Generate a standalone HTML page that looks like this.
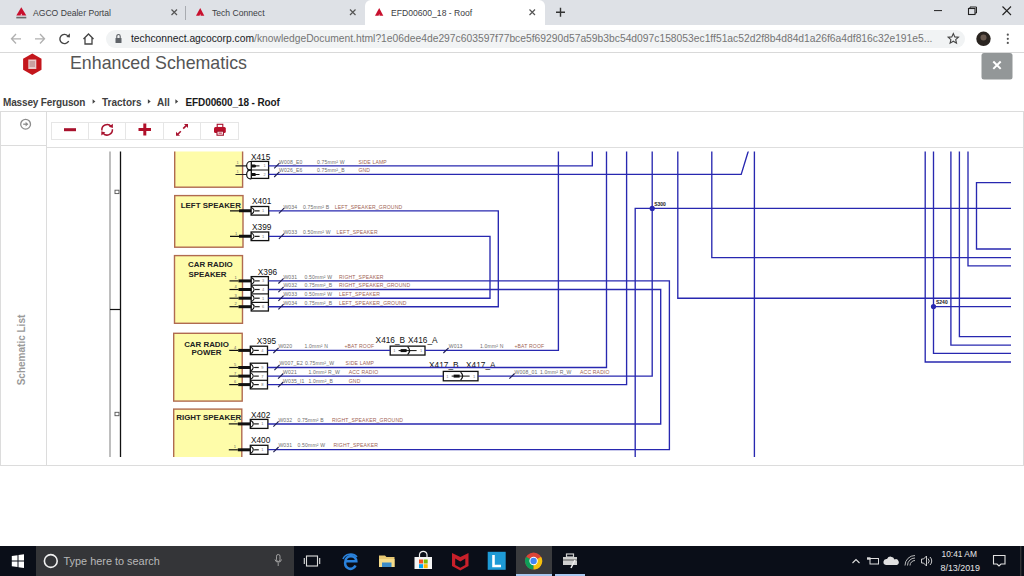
<!DOCTYPE html>
<html><head><meta charset="utf-8">
<style>
html,body{margin:0;padding:0;width:1024px;height:576px;overflow:hidden;background:#fff;font-family:"Liberation Sans",sans-serif;}
.abs{position:absolute;}
#tabbar{left:0;top:0;width:1024px;height:25px;background:#dee1e6;}
#activetab{left:365px;top:0;width:180px;height:25px;background:#fff;border-radius:6px 6px 0 0;}
#addr{left:0;top:25px;width:1024px;height:27px;background:#fff;border-bottom:1px solid #d9d9d9;}
.tabtxt{font-size:8.6px;color:#3c4043;white-space:nowrap;top:7.8px;}
#omni{left:106px;top:29.5px;width:859px;height:18.5px;background:#f1f3f4;border-radius:9.5px;}
#url{left:131px;top:33px;font-size:10.3px;color:#757575;white-space:nowrap;letter-spacing:0px;}
#url b{font-weight:normal;color:#202124;}
#title{left:70px;top:52.5px;font-size:17.8px;color:#555;white-space:nowrap;}
#bc{left:3px;top:97px;font-size:10px;font-weight:bold;color:#404040;white-space:nowrap;}
#panel{left:0;top:111px;width:1022px;height:353px;border:1px solid #dcdcdc;}
#side{left:46px;top:111px;width:1px;height:354px;background:#dcdcdc;}
#sidediv{left:0;top:145px;width:46px;height:1px;background:#dcdcdc;}
#tbdiv{left:47px;top:146.5px;width:976px;height:1.5px;background:#dedede;}
#schem{left:47px;top:148px;width:976px;height:316px;overflow:hidden;}
#taskbar{left:0;top:546px;width:1024px;height:30px;background:#0a0e18;}
#search{left:36px;top:546px;width:258px;height:30px;background:#343538;}
.btn{top:121.8px;height:16px;width:36.5px;border:1px solid #e6e6e6;background:#fff;}
#sl{left:20.5px;top:350px;font-size:10px;font-weight:bold;color:#9a9a9a;white-space:nowrap;transform:translate(-50%,-50%) rotate(-90deg);}
.ttxt{color:#e6e6e6;font-size:8.4px;white-space:nowrap;}
</style></head><body>
<div id="tabbar" class="abs"></div>
<div id="activetab" class="abs"></div>
<!-- tab separators -->
<div class="abs" style="left:185px;top:6px;width:1px;height:14px;background:#a8abb0"></div>
<div id="addr" class="abs"></div>
<div id="omni" class="abs"></div>
<div class="abs tabtxt" style="left:33px">AGCO Dealer Portal</div>
<div class="abs tabtxt" style="left:212px">Tech Connect</div>
<div class="abs tabtxt" style="left:391px">EFD00600_18 - Roof</div>
<div id="url" class="abs"><b>techconnect.agcocorp.com</b>/knowledgeDocument.html?1e06dee4de297c603597f77bce5f69290d57a59b3bc54d097c158053ec1ff51ac52d2f8b4d84d1a26f6a4df816c32e191e5...</div>
<svg class="abs" style="left:0;top:0" width="1024" height="111" viewBox="0 0 1024 111">
 <!-- tab icons -->
 <g fill="#c8102e">
  <path d="M16.3 15.6 L21.3 7.3 L26.3 15.6 Z"/>
  <path d="M196 15.7 L200.2 8.1 L204.3 15.7 Z"/>
  <path d="M375 15.7 L379.2 8.1 L383.3 15.7 Z"/>
 </g>
 <g fill="#f0d8dc">
  <path d="M20.3 15.6 L21.3 13.4 L22.3 15.6 Z"/>
  <path d="M199.4 15.7 L200.2 14 L201 15.7 Z"/>
  <path d="M378.4 15.7 L379.2 14 L380 15.7 Z"/>
 </g>
 <rect x="16.3" y="16.8" width="10" height="1.6" fill="#6a6a6a"/>
 <!-- tab close x -->
 <g stroke="#555" stroke-width="1.2">
  <path d="M171.5 9.5 L177 15 M177 9.5 L171.5 15"/>
  <path d="M350 9.5 L355.5 15 M355.5 9.5 L350 15"/>
  <path d="M529.5 9.5 L535 15 M535 9.5 L529.5 15"/>
 </g>
 <path d="M556 12.2 H565 M560.5 7.7 V16.7" stroke="#333" stroke-width="1.4"/>
 <!-- window controls -->
 <path d="M934 10.6 H942" stroke="#222" stroke-width="1"/>
 <rect x="968.5" y="8.5" width="6.5" height="6" fill="none" stroke="#222" stroke-width="1.1"/>
 <path d="M970 8.5 V7 H976.5 V13 H975" fill="none" stroke="#222" stroke-width="1"/>
 <path d="M1002.5 6.5 L1011 15 M1011 6.5 L1002.5 15" stroke="#222" stroke-width="1.1"/>
 <!-- nav icons -->
 <g fill="none" stroke="#b0b0b0" stroke-width="1.3">
  <path d="M11.5 38.8 H21 M16 34 L11.5 38.8 L16 43.5"/>
  <path d="M35 38.8 H44.5 M40 34 L44.5 38.8 L40 43.5"/>
 </g>
 <path d="M68.67 40.94 A4.6 4.6 0 1 1 67.75 35.75" fill="none" stroke="#444" stroke-width="1.4"/>
 <path d="M66.3 36.9 L69.9 33.3 L69.9 37.4 Z" fill="#444"/>
 <path d="M83.5 39 L88.5 34 L93.5 39 M85 38 V44 H92 V38" fill="none" stroke="#444" stroke-width="1.3"/>
 <!-- lock -->
 <rect x="115.5" y="38" width="6" height="5" rx="0.5" fill="#5f6368"/>
 <path d="M116.8 38 V36.2 A1.7 1.7 0 0 1 120.2 36.2 V38" fill="none" stroke="#5f6368" stroke-width="1.1"/>
 <!-- star -->
 <path d="M953.3 33.5 L954.8 36.9 L958.4 37.2 L955.7 39.6 L956.5 43.1 L953.3 41.2 L950.1 43.1 L950.9 39.6 L948.2 37.2 L951.8 36.9 Z" fill="none" stroke="#444" stroke-width="1.1"/>
 <!-- avatar -->
 <circle cx="983.5" cy="38.8" r="7.2" fill="#2a2420"/>
 <circle cx="983.5" cy="37.5" r="3" fill="#6a5a50"/>
 <g fill="#555"><circle cx="1007.8" cy="34.7" r="1.1"/><circle cx="1007.8" cy="38.8" r="1.1"/><circle cx="1007.8" cy="42.9" r="1.1"/></g>
 <!-- hex logo -->
 <path d="M32.3 53.5 L41.5 58.8 L41.5 69.7 L32.3 75 L23.1 69.7 L23.1 58.8 Z" fill="#c4161c"/>
 <rect x="28.3" y="59.5" width="8" height="9.5" fill="#e8c8c8"/>
 <rect x="29.5" y="61" width="5.5" height="6" fill="#c9a0a0"/>
 <!-- close button -->
 <rect x="981.5" y="53" width="31" height="26.5" rx="2.5" fill="#939798"/>
 <path d="M993.3 61.5 L1000.7 68.9 M1000.7 61.5 L993.3 68.9" stroke="#fff" stroke-width="2"/>
 <!-- breadcrumb chevrons -->
 <g fill="#444">
  <path d="M92.6 99.3 L95.4 101.5 L92.6 103.7 Z"/>
  <path d="M147.9 99.3 L150.7 101.5 L147.9 103.7 Z"/>
  <path d="M175.4 99.3 L178.2 101.5 L175.4 103.7 Z"/>
 </g>
</svg>
<div id="title" class="abs">Enhanced Schematics</div>
<div id="bc" class="abs"><span style="letter-spacing:-0.15px">Massey Ferguson</span><span style="position:absolute;left:99px">Tractors</span><span style="position:absolute;left:154px">All</span><span style="position:absolute;left:182.5px;letter-spacing:-0.1px;color:#1a1a1a">EFD00600_18 - Roof</span></div>
<div id="panel" class="abs"></div>
<div id="side" class="abs"></div>
<div id="sidediv" class="abs"></div>
<div id="tbdiv" class="abs"></div>
<div id="sl" class="abs">Schematic List</div>
<!-- toolbar -->
<div class="abs btn" style="left:50.8px"></div>
<div class="abs btn" style="left:87.8px"></div>
<div class="abs btn" style="left:125.3px"></div>
<div class="abs btn" style="left:162.8px"></div>
<div class="abs btn" style="left:200.3px"></div>
<svg class="abs" style="left:0;top:111px" width="260" height="37" viewBox="0 111 260 37">
 <!-- circle arrow in sidebar -->
 <circle cx="25.6" cy="124.2" r="4.9" fill="none" stroke="#8c8c8c" stroke-width="1.3"/>
 <path d="M23.2 124.2 H27.5" stroke="#8c8c8c" stroke-width="1.3"/>
 <path d="M25.6 121.8 L28.3 124.2 L25.6 126.6 Z" fill="#8c8c8c"/>
 <!-- minus -->
 <rect x="64" y="128.2" width="12" height="3" fill="#a8112c"/>
 <!-- refresh -->
 <path d="M101.9 130.5 A5.3 5.3 0 0 1 111.2 126.4" fill="none" stroke="#a8122e" stroke-width="1.5"/>
 <path d="M112.4 129.3 A5.3 5.3 0 0 1 103.1 133.2" fill="none" stroke="#a8122e" stroke-width="1.5"/>
 <path d="M108.8 126.8 L112.9 123.8 L112.9 128.1 Z" fill="#a8122e"/>
 <path d="M105.4 132.6 L101.3 135.6 L101.3 131.3 Z" fill="#a8122e"/>
 <!-- plus -->
 <path d="M138.5 129.5 H151 M144.8 123.5 V135.5" stroke="#b0102a" stroke-width="3"/>
 <!-- expand -->
 <path d="M183.2 128.6 L186.2 125.6" stroke="#a8122e" stroke-width="1.6"/>
 <path d="M184 124 H188 V128 Z" fill="#a8122e"/>
 <path d="M180.8 131.2 L177.8 134.2" stroke="#a8122e" stroke-width="1.6"/>
 <path d="M176 131.8 V135.8 H180 Z" fill="#a8122e"/>
 <!-- print -->
 <rect x="217.2" y="124.3" width="5.6" height="3.2" fill="none" stroke="#a8122e" stroke-width="1.1"/>
 <rect x="214" y="127" width="11.8" height="6" rx="1.5" fill="#b8102a"/>
 <rect x="217" y="131.2" width="6.4" height="4" fill="#fff" stroke="#a0102a" stroke-width="1.1"/>
 <rect x="218.5" y="132.6" width="3.4" height="1" fill="#b8102a"/>
</svg>
<div id="schem" class="abs">
<svg class="abs" style="left:-47px;top:-148px" width="1024" height="576" viewBox="0 0 1024 576">
<defs><clipPath id="cp"><rect x="47" y="151.5" width="964.5" height="305.5"/></clipPath></defs>
<g clip-path="url(#cp)" font-family="Liberation Sans, sans-serif">
<rect x="174.7" y="140" width="67.9" height="47.19999999999999" fill="#fefca9" stroke="#b06a50" stroke-width="1.4"/>
<rect x="174.7" y="195.6" width="68.30000000000001" height="51.599999999999994" fill="#fefca9" stroke="#b06a50" stroke-width="1.4"/>
<rect x="174.5" y="255.6" width="68.0" height="67.70000000000002" fill="#fefca9" stroke="#b06a50" stroke-width="1.4"/>
<rect x="173.7" y="333.3" width="68.5" height="67.80000000000001" fill="#fefca9" stroke="#b06a50" stroke-width="1.4"/>
<rect x="173.7" y="409.1" width="68.10000000000002" height="60.89999999999998" fill="#fefca9" stroke="#b06a50" stroke-width="1.4"/>
<text x="210.8" y="207.8" font-size="7.9" font-weight="bold" fill="#222" text-anchor="middle">LEFT SPEAKER</text>
<text x="210.4" y="266.7" font-size="7.9" font-weight="bold" fill="#222" text-anchor="middle">CAR RADIO</text>
<text x="207.5" y="276.7" font-size="7.9" font-weight="bold" fill="#222" text-anchor="middle">SPEAKER</text>
<text x="206.5" y="346.5" font-size="7.9" font-weight="bold" fill="#222" text-anchor="middle">CAR RADIO</text>
<text x="206.5" y="355.3" font-size="7.9" font-weight="bold" fill="#222" text-anchor="middle">POWER</text>
<text x="208.8" y="419.7" font-size="7.9" font-weight="bold" fill="#222" text-anchor="middle">RIGHT SPEAKER</text>
<line x1="235.5" y1="165.9" x2="247" y2="165.9" stroke="#222" stroke-width="1.1"/>
<path d="M251.3 161.5 H250.3 A3.6 4.3 0 0 0 250.3 170.20000000000002 H251.3" fill="#fff" stroke="#111" stroke-width="1.2"/>
<path d="M251.5 164.4 H254.5 A1.6 1.5 0 0 1 254.5 167.4 H251.5 Z" fill="#111"/>
<line x1="254" y1="165.9" x2="259.5" y2="165.9" stroke="#111" stroke-width="1"/>
<text x="263.5" y="167.4" font-size="4" fill="#888">1</text>
<text x="236.5" y="164.1" font-size="4" fill="#777">1</text>
<line x1="235.5" y1="174.5" x2="247" y2="174.5" stroke="#222" stroke-width="1.1"/>
<path d="M251.3 170.1 H250.3 A3.6 4.3 0 0 0 250.3 178.8 H251.3" fill="#fff" stroke="#111" stroke-width="1.2"/>
<path d="M251.5 173.0 H254.5 A1.6 1.5 0 0 1 254.5 176.0 H251.5 Z" fill="#111"/>
<line x1="254" y1="174.5" x2="259.5" y2="174.5" stroke="#111" stroke-width="1"/>
<text x="263.5" y="176.0" font-size="4" fill="#888">2</text>
<text x="236.5" y="172.7" font-size="4" fill="#777">1</text>
<rect x="251.3" y="161.4" width="17.3" height="17" fill="none" stroke="#111" stroke-width="1.3"/>
<line x1="247" y1="170" x2="268.6" y2="170" stroke="#111" stroke-width="1.2"/>
<text x="250.9" y="159.8" font-size="8.3" fill="#111">X415</text>
<line x1="230.0" y1="210.8" x2="239.0" y2="210.8" stroke="#111" stroke-width="1.2"/>
<line x1="239.0" y1="210.8" x2="251.1" y2="210.8" stroke="#111" stroke-width="3"/>
<text x="236.0" y="209.3" font-size="4" fill="#666" text-anchor="middle">1</text>
<path d="M251.1 207.1 Q257.1 210.8 251.1 214.50000000000003" fill="none" stroke="#111" stroke-width="1.1"/>
<line x1="254.9" y1="210.8" x2="259.6" y2="210.8" stroke="#222" stroke-width="1.2"/>
<text x="263.1" y="212.3" font-size="4" fill="#777" text-anchor="middle">1</text>
<rect x="251.1" y="206.5" width="17.599999999999994" height="8.600000000000023" fill="none" stroke="#111" stroke-width="1.3"/>
<text x="252" y="203.9" font-size="8.3" fill="#111">X401</text>
<line x1="230.0" y1="236.3" x2="239.0" y2="236.3" stroke="#111" stroke-width="1.2"/>
<line x1="239.0" y1="236.3" x2="251.1" y2="236.3" stroke="#111" stroke-width="3"/>
<text x="236.0" y="234.8" font-size="4" fill="#666" text-anchor="middle">1</text>
<path d="M251.1 232.6 Q257.1 236.3 251.1 240.00000000000003" fill="none" stroke="#111" stroke-width="1.1"/>
<line x1="254.9" y1="236.3" x2="259.6" y2="236.3" stroke="#222" stroke-width="1.2"/>
<text x="263.1" y="237.8" font-size="4" fill="#777" text-anchor="middle">1</text>
<rect x="251.1" y="232.0" width="17.599999999999994" height="8.600000000000023" fill="none" stroke="#111" stroke-width="1.3"/>
<text x="252" y="229.7" font-size="8.3" fill="#111">X399</text>
<line x1="229.5" y1="280.9" x2="238.5" y2="280.9" stroke="#111" stroke-width="1.2"/>
<line x1="238.5" y1="280.9" x2="251.2" y2="280.9" stroke="#111" stroke-width="3"/>
<text x="235.5" y="279.4" font-size="4" fill="#666" text-anchor="middle">1</text>
<path d="M251.2 277.2 Q257.2 280.9 251.2 284.59999999999997" fill="none" stroke="#111" stroke-width="1.1"/>
<line x1="255.0" y1="280.9" x2="259.7" y2="280.9" stroke="#222" stroke-width="1.2"/>
<text x="263.2" y="282.4" font-size="4" fill="#777" text-anchor="middle">3</text>
<line x1="229.5" y1="289.5" x2="238.5" y2="289.5" stroke="#111" stroke-width="1.2"/>
<line x1="238.5" y1="289.5" x2="251.2" y2="289.5" stroke="#111" stroke-width="3"/>
<text x="235.5" y="288.0" font-size="4" fill="#666" text-anchor="middle">4</text>
<path d="M251.2 285.8 Q257.2 289.5 251.2 293.2" fill="none" stroke="#111" stroke-width="1.1"/>
<line x1="255.0" y1="289.5" x2="259.7" y2="289.5" stroke="#222" stroke-width="1.2"/>
<text x="263.2" y="291.0" font-size="4" fill="#777" text-anchor="middle">4</text>
<line x1="251.2" y1="285.2" x2="268.4" y2="285.2" stroke="#111" stroke-width="1.2"/>
<line x1="229.5" y1="298.2" x2="238.5" y2="298.2" stroke="#111" stroke-width="1.2"/>
<line x1="238.5" y1="298.2" x2="251.2" y2="298.2" stroke="#111" stroke-width="3"/>
<text x="235.5" y="296.7" font-size="4" fill="#666" text-anchor="middle">3</text>
<path d="M251.2 294.5 Q257.2 298.2 251.2 301.9" fill="none" stroke="#111" stroke-width="1.1"/>
<line x1="255.0" y1="298.2" x2="259.7" y2="298.2" stroke="#222" stroke-width="1.2"/>
<text x="263.2" y="299.7" font-size="4" fill="#777" text-anchor="middle">1</text>
<line x1="251.2" y1="293.9" x2="268.4" y2="293.9" stroke="#111" stroke-width="1.2"/>
<line x1="229.5" y1="306.7" x2="238.5" y2="306.7" stroke="#111" stroke-width="1.2"/>
<line x1="238.5" y1="306.7" x2="251.2" y2="306.7" stroke="#111" stroke-width="3"/>
<text x="235.5" y="305.2" font-size="4" fill="#666" text-anchor="middle">2</text>
<path d="M251.2 303.0 Q257.2 306.7 251.2 310.4" fill="none" stroke="#111" stroke-width="1.1"/>
<line x1="255.0" y1="306.7" x2="259.7" y2="306.7" stroke="#222" stroke-width="1.2"/>
<text x="263.2" y="308.2" font-size="4" fill="#777" text-anchor="middle">6</text>
<line x1="251.2" y1="302.4" x2="268.4" y2="302.4" stroke="#111" stroke-width="1.2"/>
<rect x="251.2" y="276.59999999999997" width="17.19999999999999" height="34.400000000000034" fill="none" stroke="#111" stroke-width="1.3"/>
<text x="257.8" y="274.7" font-size="8.3" fill="#111">X396</text>
<line x1="229.2" y1="350.4" x2="238.2" y2="350.4" stroke="#111" stroke-width="1.2"/>
<line x1="238.2" y1="350.4" x2="250.3" y2="350.4" stroke="#111" stroke-width="3"/>
<text x="235.2" y="348.9" font-size="4" fill="#666" text-anchor="middle">4</text>
<path d="M250.3 346.8 Q256.3 350.4 250.3 353.99999999999994" fill="none" stroke="#111" stroke-width="1.1"/>
<line x1="254.10000000000002" y1="350.4" x2="258.8" y2="350.4" stroke="#222" stroke-width="1.2"/>
<text x="262.3" y="351.9" font-size="4" fill="#777" text-anchor="middle">4</text>
<rect x="250.3" y="346.2" width="17.19999999999999" height="8.399999999999977" fill="none" stroke="#111" stroke-width="1.3"/>
<text x="256.8" y="343.8" font-size="8.3" fill="#111">X395</text>
<line x1="229.2" y1="367.5" x2="238.2" y2="367.5" stroke="#111" stroke-width="1.2"/>
<line x1="238.2" y1="367.5" x2="250.3" y2="367.5" stroke="#111" stroke-width="3"/>
<text x="235.2" y="366.0" font-size="4" fill="#666" text-anchor="middle">5</text>
<path d="M250.3 363.8 Q256.3 367.5 250.3 371.2" fill="none" stroke="#111" stroke-width="1.1"/>
<line x1="254.10000000000002" y1="367.5" x2="258.8" y2="367.5" stroke="#222" stroke-width="1.2"/>
<text x="262.3" y="369.0" font-size="4" fill="#777" text-anchor="middle">9</text>
<line x1="229.2" y1="376.1" x2="238.2" y2="376.1" stroke="#111" stroke-width="1.2"/>
<line x1="238.2" y1="376.1" x2="250.3" y2="376.1" stroke="#111" stroke-width="3"/>
<text x="235.2" y="374.6" font-size="4" fill="#666" text-anchor="middle">7</text>
<path d="M250.3 372.40000000000003 Q256.3 376.1 250.3 379.8" fill="none" stroke="#111" stroke-width="1.1"/>
<line x1="254.10000000000002" y1="376.1" x2="258.8" y2="376.1" stroke="#222" stroke-width="1.2"/>
<text x="262.3" y="377.6" font-size="4" fill="#777" text-anchor="middle">7</text>
<line x1="250.3" y1="371.8" x2="267.5" y2="371.8" stroke="#111" stroke-width="1.2"/>
<line x1="229.2" y1="384.6" x2="238.2" y2="384.6" stroke="#111" stroke-width="1.2"/>
<line x1="238.2" y1="384.6" x2="250.3" y2="384.6" stroke="#111" stroke-width="3"/>
<text x="235.2" y="383.1" font-size="4" fill="#666" text-anchor="middle">6</text>
<path d="M250.3 380.90000000000003 Q256.3 384.6 250.3 388.3" fill="none" stroke="#111" stroke-width="1.1"/>
<line x1="254.10000000000002" y1="384.6" x2="258.8" y2="384.6" stroke="#222" stroke-width="1.2"/>
<text x="262.3" y="386.1" font-size="4" fill="#777" text-anchor="middle">8</text>
<line x1="250.3" y1="380.3" x2="267.5" y2="380.3" stroke="#111" stroke-width="1.2"/>
<rect x="250.3" y="363.2" width="17.19999999999999" height="25.700000000000045" fill="none" stroke="#111" stroke-width="1.3"/>
<line x1="228.8" y1="423.9" x2="237.8" y2="423.9" stroke="#111" stroke-width="1.2"/>
<line x1="237.8" y1="423.9" x2="250.3" y2="423.9" stroke="#111" stroke-width="3"/>
<text x="234.8" y="422.4" font-size="4" fill="#666" text-anchor="middle">1</text>
<path d="M250.3 420.0 Q256.3 423.9 250.3 427.79999999999995" fill="none" stroke="#111" stroke-width="1.1"/>
<line x1="254.10000000000002" y1="423.9" x2="258.8" y2="423.9" stroke="#222" stroke-width="1.2"/>
<text x="262.3" y="425.4" font-size="4" fill="#777" text-anchor="middle">1</text>
<rect x="250.3" y="419.4" width="17.599999999999966" height="9.0" fill="none" stroke="#111" stroke-width="1.3"/>
<text x="250.9" y="417.6" font-size="8.3" fill="#111">X402</text>
<line x1="228.8" y1="449.8" x2="237.8" y2="449.8" stroke="#111" stroke-width="1.2"/>
<line x1="237.8" y1="449.8" x2="250.3" y2="449.8" stroke="#111" stroke-width="3"/>
<text x="234.8" y="448.3" font-size="4" fill="#666" text-anchor="middle">1</text>
<path d="M250.3 445.90000000000003 Q256.3 449.8 250.3 453.7" fill="none" stroke="#111" stroke-width="1.1"/>
<line x1="254.10000000000002" y1="449.8" x2="258.8" y2="449.8" stroke="#222" stroke-width="1.2"/>
<text x="262.3" y="451.3" font-size="4" fill="#777" text-anchor="middle">1</text>
<rect x="250.3" y="445.3" width="17.599999999999966" height="9.0" fill="none" stroke="#111" stroke-width="1.3"/>
<text x="250.9" y="443.1" font-size="8.3" fill="#111">X400</text>
<rect x="390.2" y="346.15000000000003" width="34.80000000000001" height="8.9" fill="#fff" stroke="#111" stroke-width="1.3"/>
<line x1="398.6" y1="350.6" x2="416.6" y2="350.6" stroke="#111" stroke-width="1"/>
<line x1="400.6" y1="350.6" x2="406.6" y2="350.6" stroke="#111" stroke-width="3"/>
<path d="M407.6 346.6 Q411.6 350.6 407.6 354.6" fill="none" stroke="#111" stroke-width="1.2"/>
<text x="393.2" y="352.1" font-size="4" fill="#777">1</text>
<text x="420" y="352.1" font-size="4" fill="#777">1</text>
<rect x="443.3" y="371.40000000000003" width="34.69999999999999" height="9.4" fill="#fff" stroke="#111" stroke-width="1.3"/>
<line x1="451.65" y1="376.1" x2="469.65" y2="376.1" stroke="#111" stroke-width="1"/>
<line x1="453.65" y1="376.1" x2="459.65" y2="376.1" stroke="#111" stroke-width="3"/>
<path d="M460.65 372.1 Q464.65 376.1 460.65 380.1" fill="none" stroke="#111" stroke-width="1.2"/>
<text x="446.3" y="377.6" font-size="4" fill="#777">1</text>
<text x="473" y="377.6" font-size="4" fill="#777">1</text>
<text x="375.6" y="342.5" font-size="8.3" fill="#111">X416_B</text>
<text x="408" y="342.5" font-size="8.3" fill="#111">X416_A</text>
<text x="429" y="367.5" font-size="8.3" fill="#111">X417_B</text>
<text x="466" y="367.5" font-size="8.3" fill="#111">X417_A</text>
<polyline points="268.4,165.8 592.3,165.8 592.3,150" fill="none" stroke="#2828b0" stroke-width="1.35"/>
<polyline points="268.4,174.4 741.2,174.4 748.2,151.5 748.6,150" fill="none" stroke="#2828b0" stroke-width="1.35"/>
<polyline points="268.7,210.8 498.3,210.8 498.3,306.7 268.4,306.7" fill="none" stroke="#2828b0" stroke-width="1.35"/>
<polyline points="268.7,236.3 490,236.3 490,298.2 268.4,298.2" fill="none" stroke="#2828b0" stroke-width="1.35"/>
<polyline points="268.4,280.9 669.4,280.9 669.4,449.6 267.9,449.6" fill="none" stroke="#2828b0" stroke-width="1.35"/>
<polyline points="268.4,289.5 660.7,289.5 660.7,424 267.9,424" fill="none" stroke="#2828b0" stroke-width="1.35"/>
<polyline points="267.5,350.4 390.2,350.4" fill="none" stroke="#2828b0" stroke-width="1.35"/>
<polyline points="425,350.4 558.4,350.4 558.4,150" fill="none" stroke="#2828b0" stroke-width="1.35"/>
<polyline points="267.5,367.5 606.5,367.5 606.5,150" fill="none" stroke="#2828b0" stroke-width="1.35"/>
<polyline points="267.5,376.1 443.3,376.1" fill="none" stroke="#2828b0" stroke-width="1.35"/>
<polyline points="478,376.1 652.2,376.1 652.2,150" fill="none" stroke="#2828b0" stroke-width="1.35"/>
<polyline points="267.5,384.6 626.6,384.6 626.6,150" fill="none" stroke="#2828b0" stroke-width="1.35"/>
<polyline points="635.2,470 635.2,208.4 1011,208.4" fill="none" stroke="#2828b0" stroke-width="1.35"/>
<polyline points="677.8,150 677.8,298.2 1011,298.2" fill="none" stroke="#2828b0" stroke-width="1.35"/>
<polyline points="711.8,150 711.8,257.6 1011,257.6" fill="none" stroke="#2828b0" stroke-width="1.35"/>
<polyline points="754.4,150 754.4,470" fill="none" stroke="#2828b0" stroke-width="1.35"/>
<polyline points="925.2,150 925.2,362 1011,362" fill="none" stroke="#2828b0" stroke-width="1.35"/>
<polyline points="933.5,150 933.5,353.4 1011,353.4" fill="none" stroke="#2828b0" stroke-width="1.35"/>
<polyline points="933.5,306.6 1011,306.6" fill="none" stroke="#2828b0" stroke-width="1.35"/>
<polyline points="950.9,150 950.9,345.1 1011,345.1" fill="none" stroke="#2828b0" stroke-width="1.35"/>
<polyline points="959.4,150 959.4,336.6 1011,336.6" fill="none" stroke="#2828b0" stroke-width="1.35"/>
<polyline points="968,150 968,265.9 1011,265.9" fill="none" stroke="#2828b0" stroke-width="1.35"/>
<polyline points="1011,182.6 976.5,182.6 976.5,249 1011,249" fill="none" stroke="#2828b0" stroke-width="1.35"/>
<circle cx="652.2" cy="208.4" r="2.6" fill="#2828b0"/>
<circle cx="933.5" cy="306.6" r="2.6" fill="#2828b0"/>
<text x="654.2" y="206.3" font-size="5" font-weight="bold" fill="#222">S300</text>
<text x="936" y="303.9" font-size="5" font-weight="bold" fill="#222">S240</text>
<line x1="274.2" y1="168.4" x2="279.40000000000003" y2="163.20000000000002" stroke="#1c1c50" stroke-width="1.1"/>
<line x1="274.2" y1="177.0" x2="279.40000000000003" y2="171.8" stroke="#1c1c50" stroke-width="1.1"/>
<line x1="278.9" y1="213.4" x2="284.1" y2="208.20000000000002" stroke="#1c1c50" stroke-width="1.1"/>
<line x1="278.9" y1="238.9" x2="284.1" y2="233.70000000000002" stroke="#1c1c50" stroke-width="1.1"/>
<line x1="278.4" y1="283.5" x2="283.6" y2="278.29999999999995" stroke="#1c1c50" stroke-width="1.1"/>
<line x1="278.4" y1="292.1" x2="283.6" y2="286.9" stroke="#1c1c50" stroke-width="1.1"/>
<line x1="278.4" y1="300.8" x2="283.6" y2="295.59999999999997" stroke="#1c1c50" stroke-width="1.1"/>
<line x1="278.4" y1="309.3" x2="283.6" y2="304.09999999999997" stroke="#1c1c50" stroke-width="1.1"/>
<line x1="273.4" y1="353.0" x2="278.6" y2="347.79999999999995" stroke="#1c1c50" stroke-width="1.1"/>
<line x1="274.4" y1="370.1" x2="279.6" y2="364.9" stroke="#1c1c50" stroke-width="1.1"/>
<line x1="278.09999999999997" y1="378.70000000000005" x2="283.3" y2="373.5" stroke="#1c1c50" stroke-width="1.1"/>
<line x1="278.09999999999997" y1="387.20000000000005" x2="283.3" y2="382.0" stroke="#1c1c50" stroke-width="1.1"/>
<line x1="273.4" y1="426.6" x2="278.6" y2="421.4" stroke="#1c1c50" stroke-width="1.1"/>
<line x1="273.4" y1="452.20000000000005" x2="278.6" y2="447.0" stroke="#1c1c50" stroke-width="1.1"/>
<line x1="443.4" y1="353" x2="448.6" y2="347.8" stroke="#1c1c50" stroke-width="1.1"/>
<line x1="509.4" y1="378.7" x2="514.6" y2="373.5" stroke="#1c1c50" stroke-width="1.1"/>
<text x="279" y="163.5" font-size="5.1" letter-spacing="0.15" fill="#6e6e6e">W008_E0</text>
<text x="317" y="163.5" font-size="5.1" letter-spacing="0.15" fill="#6e6e6e">0.75mm² W</text>
<text x="358.4" y="163.5" font-size="5.1" letter-spacing="0.15" fill="#a06454">SIDE LAMP</text>
<text x="279" y="172.3" font-size="5.1" letter-spacing="0.15" fill="#6e6e6e">W026_E6</text>
<text x="317" y="172.3" font-size="5.1" letter-spacing="0.15" fill="#6e6e6e">0.75mm²_B</text>
<text x="358.4" y="172.3" font-size="5.1" letter-spacing="0.15" fill="#a06454">GND</text>
<text x="283.4" y="208.6" font-size="5.1" letter-spacing="0.15" fill="#6e6e6e">W034</text>
<text x="303" y="208.6" font-size="5.1" letter-spacing="0.15" fill="#6e6e6e">0.75mm² B</text>
<text x="334.7" y="208.6" font-size="5.1" letter-spacing="0.15" fill="#a06454">LEFT_SPEAKER_GROUND</text>
<text x="283.4" y="234.1" font-size="5.1" letter-spacing="0.15" fill="#6e6e6e">W033</text>
<text x="303" y="234.1" font-size="5.1" letter-spacing="0.15" fill="#6e6e6e">0.50mm² W</text>
<text x="336.6" y="234.1" font-size="5.1" letter-spacing="0.15" fill="#a06454">LEFT_SPEAKER</text>
<text x="283.4" y="278.8" font-size="5.1" letter-spacing="0.15" fill="#6e6e6e">W031</text>
<text x="304.5" y="278.8" font-size="5.1" letter-spacing="0.15" fill="#6e6e6e">0.50mm² W</text>
<text x="339" y="278.8" font-size="5.1" letter-spacing="0.15" fill="#a06454">RIGHT_SPEAKER</text>
<text x="283.4" y="287.4" font-size="5.1" letter-spacing="0.15" fill="#6e6e6e">W032</text>
<text x="304.5" y="287.4" font-size="5.1" letter-spacing="0.15" fill="#6e6e6e">0.75mm²_B</text>
<text x="339" y="287.4" font-size="5.1" letter-spacing="0.15" fill="#a06454">RIGHT_SPEAKER_GROUND</text>
<text x="283.4" y="296.1" font-size="5.1" letter-spacing="0.15" fill="#6e6e6e">W033</text>
<text x="304.5" y="296.1" font-size="5.1" letter-spacing="0.15" fill="#6e6e6e">0.50mm² W</text>
<text x="339" y="296.1" font-size="5.1" letter-spacing="0.15" fill="#a06454">LEFT_SPEAKER</text>
<text x="283.4" y="304.6" font-size="5.1" letter-spacing="0.15" fill="#6e6e6e">W034</text>
<text x="304.5" y="304.6" font-size="5.1" letter-spacing="0.15" fill="#6e6e6e">0.75mm²_B</text>
<text x="339" y="304.6" font-size="5.1" letter-spacing="0.15" fill="#a06454">LEFT_SPEAKER_GROUND</text>
<text x="278.4" y="348.3" font-size="5.1" letter-spacing="0.15" fill="#6e6e6e">W020</text>
<text x="304.5" y="348.3" font-size="5.1" letter-spacing="0.15" fill="#6e6e6e">1.0mm² N</text>
<text x="344.4" y="348.3" font-size="5.1" letter-spacing="0.15" fill="#a06454">+BAT ROOF</text>
<text x="279.5" y="365.4" font-size="5.1" letter-spacing="0.15" fill="#6e6e6e">W007_E2</text>
<text x="305" y="365.4" font-size="5.1" letter-spacing="0.15" fill="#6e6e6e">0.75mm²_W</text>
<text x="345.6" y="365.4" font-size="5.1" letter-spacing="0.15" fill="#a06454">SIDE LAMP</text>
<text x="283" y="374" font-size="5.1" letter-spacing="0.15" fill="#6e6e6e">W021</text>
<text x="308.4" y="374" font-size="5.1" letter-spacing="0.15" fill="#6e6e6e">1.0mm² R_W</text>
<text x="348.7" y="374" font-size="5.1" letter-spacing="0.15" fill="#a06454">ACC RADIO</text>
<text x="283" y="382.5" font-size="5.1" letter-spacing="0.15" fill="#6e6e6e">W035_I1</text>
<text x="308.4" y="382.5" font-size="5.1" letter-spacing="0.15" fill="#6e6e6e">1.0mm²_B</text>
<text x="348.7" y="382.5" font-size="5.1" letter-spacing="0.15" fill="#a06454">GND</text>
<text x="448.7" y="348.3" font-size="5.1" letter-spacing="0.15" fill="#6e6e6e">W013</text>
<text x="480" y="348.3" font-size="5.1" letter-spacing="0.15" fill="#6e6e6e">1.0mm² N</text>
<text x="514.4" y="348.3" font-size="5.1" letter-spacing="0.15" fill="#a06454">+BAT ROOF</text>
<text x="514.6" y="374" font-size="5.1" letter-spacing="0.15" fill="#6e6e6e">W008_01</text>
<text x="540" y="374" font-size="5.1" letter-spacing="0.15" fill="#6e6e6e">1.0mm² R_W</text>
<text x="580" y="374" font-size="5.1" letter-spacing="0.15" fill="#a06454">ACC RADIO</text>
<text x="278.4" y="421.9" font-size="5.1" letter-spacing="0.15" fill="#6e6e6e">W032</text>
<text x="297.5" y="421.9" font-size="5.1" letter-spacing="0.15" fill="#6e6e6e">0.75mm² B</text>
<text x="331.9" y="421.9" font-size="5.1" letter-spacing="0.15" fill="#a06454">RIGHT_SPEAKER_GROUND</text>
<text x="278.4" y="447.4" font-size="5.1" letter-spacing="0.15" fill="#6e6e6e">W031</text>
<text x="297.5" y="447.4" font-size="5.1" letter-spacing="0.15" fill="#6e6e6e">0.50mm² W</text>
<text x="333.4" y="447.4" font-size="5.1" letter-spacing="0.15" fill="#a06454">RIGHT_SPEAKER</text>
<line x1="110" y1="150" x2="110" y2="470" stroke="#a8a8a8" stroke-width="1.5"/>
<line x1="120.5" y1="150" x2="120.5" y2="470" stroke="#111" stroke-width="1.3"/>
<line x1="110" y1="309.5" x2="120.5" y2="309.5" stroke="#111" stroke-width="1.2"/>
<rect x="115" y="190.2" width="4" height="3.4" fill="none" stroke="#555" stroke-width="0.9"/>
<rect x="115" y="412.3" width="4" height="3.4" fill="none" stroke="#555" stroke-width="0.9"/>
</g>
</svg>
</div>
<!-- taskbar -->
<div id="taskbar" class="abs"></div>
<div id="search" class="abs"></div>
<div class="abs" style="left:63.5px;top:555px;font-size:10.9px;color:#b8b8b8;white-space:nowrap">Type here to search</div>
<div class="abs" style="left:516px;top:546px;width:36px;height:30px;background:#3a3b3e"></div>
<div class="abs" style="left:516px;top:574px;width:36px;height:2px;background:#a8c8f0"></div>
<div class="abs" style="left:555px;top:574px;width:30px;height:2px;background:#a8c8f0"></div>
<div class="abs ttxt" style="left:941.5px;top:549px">10:41 AM</div>
<div class="abs ttxt" style="left:940.5px;top:562.5px;font-size:8.9px">8/13/2019</div>
<svg class="abs" style="left:0;top:546px" width="1024" height="30" viewBox="0 546 1024 30">
 <!-- windows logo -->
 <g fill="#fff">
  <path d="M11.8 556 L17.5 555.2 V560.6 H11.8 Z"/>
  <path d="M18.5 555 L24 554.3 V560.6 H18.5 Z"/>
  <path d="M11.8 561.6 H17.5 V567 L11.8 566.2 Z"/>
  <path d="M18.5 561.6 H24 V567.9 L18.5 567.2 Z"/>
 </g>
 <circle cx="50.8" cy="561" r="6.4" fill="none" stroke="#f0f0f0" stroke-width="1.6"/>
 <!-- mic -->
 <rect x="276.5" y="554.5" width="3.5" height="7" rx="1.7" fill="none" stroke="#aaa" stroke-width="0.9"/>
 <path d="M275 559.5 A3.3 3.3 0 0 0 281.5 559.5 M278.2 563 V566" fill="none" stroke="#aaa" stroke-width="0.9"/>
 <!-- task view -->
 <rect x="306.5" y="556" width="11" height="10" fill="none" stroke="#ddd" stroke-width="1.1"/>
 <path d="M304.3 558 V564 M319.7 558 V564" stroke="#ddd" stroke-width="1.1"/>
 <!-- edge -->
 <path d="M345.5 561.3 H356.3 A5.4 5.2 0 0 0 345.5 561.3 A5.4 5.4 0 0 0 355.5 565.5" fill="none" stroke="#2a82dc" stroke-width="2.6"/>
 <path d="M343 559 A8 7 0 0 1 357 557" fill="none" stroke="#2a82dc" stroke-width="1.6"/>
 <!-- explorer -->
 <path d="M379 555.5 H385 L386.5 557 H394.5 V567 H379 Z" fill="#e8c873"/>
 <rect x="379" y="559" width="15.5" height="8" fill="#f6dc8a"/>
 <rect x="382" y="562.5" width="9.5" height="4.5" fill="#3c8cc8"/>
 <!-- store -->
 <rect x="414.5" y="557" width="17.5" height="12" fill="#f4f4f4"/>
 <path d="M419.5 557 V554.5 A3.8 3.8 0 0 1 427 554.5 V557" fill="none" stroke="#eee" stroke-width="1.2"/>
 <rect x="419" y="559.5" width="4" height="4" fill="#f25022"/>
 <rect x="423.7" y="559.5" width="4" height="4" fill="#7fba00"/>
 <rect x="419" y="564.2" width="4" height="4" fill="#00a4ef"/>
 <rect x="423.7" y="564.2" width="4" height="4" fill="#ffb900"/>
 <!-- mcafee -->
 <path d="M452 553 L460.3 557 L468.5 553 V566 L460.3 570.5 L452 566 Z" fill="#c8202a"/>
 <path d="M455.2 558.5 L460.3 561.5 L465.3 558.5 V565 L460.3 567.8 L455.2 565 Z" fill="#0a0e18"/>
 <!-- L -->
 <rect x="487.7" y="551.8" width="18" height="18" fill="#1e9ad6"/>
 <path d="M493.5 555 V566 H501" fill="none" stroke="#fff" stroke-width="2.6"/>
 <!-- chrome -->
 <circle cx="533.6" cy="561" r="8.6" fill="#db4437"/>
 <path d="M533.6 561 L526.15 556.7 A8.6 8.6 0 0 0 533.6 569.6 Z" fill="#0f9d58"/>
 <path d="M533.6 561 L533.6 569.6 A8.6 8.6 0 0 0 541.05 556.7 Z" fill="#f4c20d"/>
 <circle cx="533.6" cy="561" r="4.2" fill="#fff"/>
 <circle cx="533.6" cy="561" r="3.2" fill="#4285f4"/>
 <!-- tool -->
 <rect x="563" y="557" width="14" height="8" fill="#cfcfcf"/>
 <rect x="566.5" y="554" width="7" height="3" fill="none" stroke="#cfcfcf" stroke-width="1.2"/>
 <path d="M563 560 H577" stroke="#555" stroke-width="1"/>
 <path d="M575 560 L571 568" stroke="#eee" stroke-width="1.6"/>
 <!-- tray -->
 <path d="M852.5 563 L856 559.5 L859.5 563" fill="none" stroke="#ddd" stroke-width="1.1"/>
 <rect x="870" y="558.5" width="8.5" height="5.5" fill="none" stroke="#ddd" stroke-width="1"/>
 <rect x="867" y="557.3" width="3.5" height="2.4" fill="#ddd"/>
 <path d="M886 565 A3 3 0 0 1 887 559 A4 4 0 0 1 894.5 559.5 A3 3 0 0 1 897 565 Z" fill="#e0e0e0"/>
 <path d="M905 565.5 A10 10 0 0 1 915 555.5 M907.5 565.5 A7.5 7.5 0 0 1 915 558 M910 565.5 A5 5 0 0 1 915 560.5" fill="none" stroke="#ccc" stroke-width="0.9"/>
 <path d="M921.5 559 H923.5 L926.5 556 V566 L923.5 563 H921.5 Z" fill="none" stroke="#ddd" stroke-width="0.9"/>
 <path d="M928 558.5 A3.5 3.5 0 0 1 928 563.5 M930 557 A5.5 5.5 0 0 1 930 565" fill="none" stroke="#ddd" stroke-width="0.9"/>
 <path d="M993.5 555.5 H1005 V564 H1001 L999 566 L997 564 H993.5 Z" fill="none" stroke="#e0e0e0" stroke-width="1.1"/>
 <rect x="1020.3" y="546" width="1" height="30" fill="#444"/>
</svg>
</body></html>
